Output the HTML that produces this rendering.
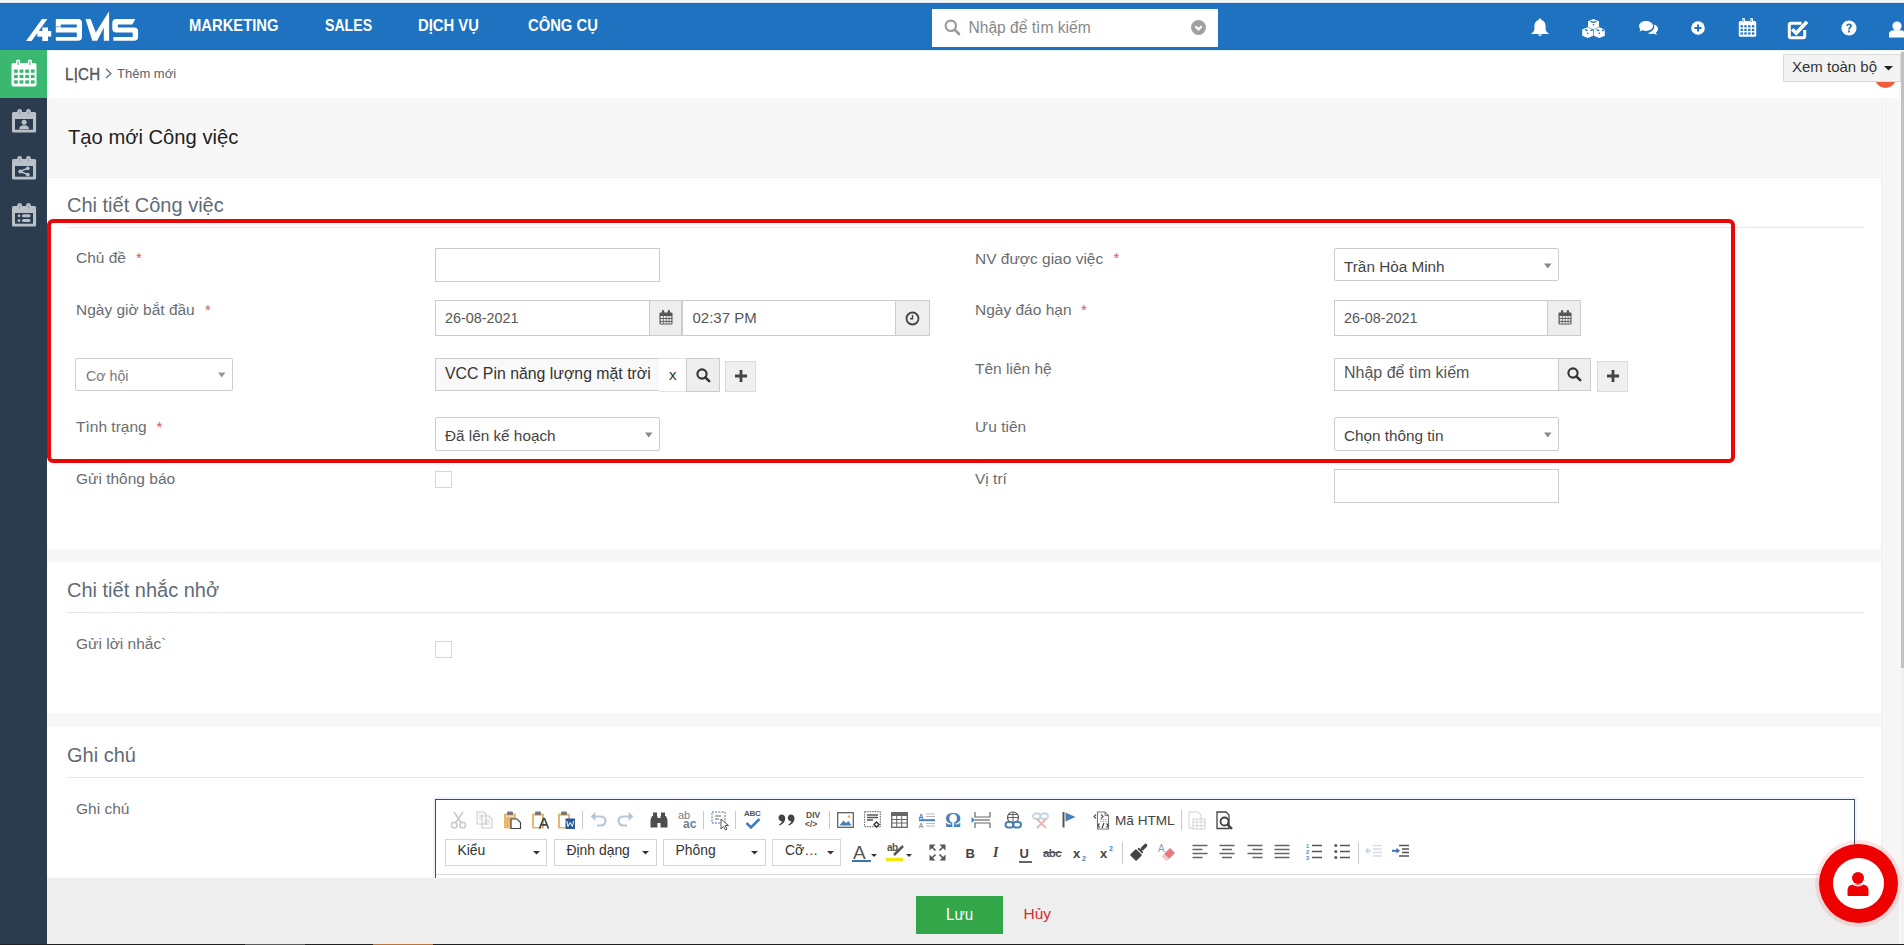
<!DOCTYPE html>
<html><head><meta charset="utf-8"><title>Tạo mới Công việc</title>
<style>
*{box-sizing:border-box;margin:0;padding:0}
html,body{width:1904px;height:945px;overflow:hidden;background:#f7f7f7;font-family:"Liberation Sans",sans-serif;position:relative}
.a{position:absolute}
.t{position:absolute;line-height:1;white-space:nowrap}
svg{position:absolute;overflow:visible}
</style></head><body>
<div class="a" style="left:0px;top:0px;width:1904px;height:2px;background:#f1f6f2"></div>
<div class="a" style="left:0px;top:2px;width:1904px;height:1px;background:#dcecfb"></div>
<div class="a" style="left:0px;top:3px;width:1904px;height:47px;background:#1e72bf"></div>
<div class="a" style="left:0px;top:3px;width:1904px;height:1px;background:#2c62a2"></div>
<svg style="left:0px;top:0px" width="150" height="50" viewBox="0 0 150 50">
<g fill="#fff">
<path d="M26 41 L31.6 41 L47.4 19 L42 19 Z"/>
<path d="M42.3 27.5 L48 27.5 L48 41 L42.3 41 Z"/>
<path d="M37.3 31 L51.2 31 L51.2 36.6 L37.3 36.6 Z"/>
<path fill-rule="evenodd" d="M55.8 19 L78 19 Q82 19 82 23 L82 36.8 Q82 40.8 78 40.8 L55.8 40.8 L55.8 37 L76.8 37 L76.8 32.4 L55.8 32.4 Z M60.8 24.4 L76.8 24.4 L76.8 27.4 L60.8 27.4 Z"/>
<path d="M55.8 26.2 L61 26.2 L61 27.2 L55.8 27.2 Z" fill="#7fb0de"/>
<path d="M85.5 19 L90.6 19 L95.8 32.6 L108.4 12.2 L109.1 12.2 L109.1 40.8 L103.8 40.8 L103.8 27.5 L97.2 40.8 L92.3 40.8 Z"/>
<path d="M116 19 L135.4 19 L132.3 24.4 L117.9 24.4 L117.9 27.4 L134.1 27.4 Q138.1 27.4 138.1 31.4 L138.1 36.8 Q138.1 40.8 134.1 40.8 L113.3 40.8 L113.3 37 L132.7 37 L132.7 32.4 L116.3 32.4 Q112.3 32.4 112.3 28.4 L112.3 23 Q112.3 19 116 19 Z"/>
</g></svg>
<div class="t" style="left:189px;top:17.11px;font-size:17px;color:#fff;font-weight:700;transform:scaleX(0.87);transform-origin:0 0;letter-spacing:0">MARKETING</div>
<div class="t" style="left:325px;top:17.11px;font-size:17px;color:#fff;font-weight:700;transform:scaleX(0.83);transform-origin:0 0">SALES</div>
<div class="t" style="left:418px;top:17.11px;font-size:17px;color:#fff;font-weight:700;transform:scaleX(0.87);transform-origin:0 0;letter-spacing:0">DỊCH VỤ</div>
<div class="t" style="left:528px;top:17.11px;font-size:17px;color:#fff;font-weight:700;transform:scaleX(0.87);transform-origin:0 0;letter-spacing:0">CÔNG CỤ</div>
<div class="a" style="left:932px;top:9px;width:286px;height:38px;background:#fff"></div>
<svg style="left:944px;top:19px" width="17" height="17" viewBox="0 0 17 17"><circle cx="6.8" cy="6.8" r="5.2" fill="none" stroke="#9a9a9a" stroke-width="2.2"/><path d="M10.6 10.6 L15 15" stroke="#9a9a9a" stroke-width="2.6" stroke-linecap="round"/></svg>
<div class="t" style="left:968.5px;top:19.54px;font-size:15.6px;color:#888;font-weight:400;">Nhập để tìm kiếm</div>
<svg style="left:1191px;top:20px" width="15" height="15" viewBox="0 0 15 15"><circle cx="7.5" cy="7.5" r="7.5" fill="#a0a0a0"/><path d="M4.3 6.2 L7.5 9.4 L10.7 6.2" fill="none" stroke="#fff" stroke-width="2.2"/></svg>
<svg style="left:1531px;top:18px" width="18" height="19" viewBox="0 0 18 19"><path d="M9 0.5 C9.9 0.5 10.3 1.1 10.3 1.9 C13.3 2.6 14.6 5 14.6 8.2 L14.6 11 C14.6 13 16 14.5 17.6 15.4 L17.6 16.1 L0.4 16.1 L0.4 15.4 C2 14.5 3.4 13 3.4 11 L3.4 8.2 C3.4 5 4.7 2.6 7.7 1.9 C7.7 1.1 8.1 0.5 9 0.5 Z" fill="#fff"/><path d="M6.8 16.6 Q9 19.6 11.2 16.6 Z" fill="#fff"/></svg>
<svg style="left:1582px;top:19px" width="23" height="19" viewBox="0 0 23 19">
<path d="M11.5 0 L17 2.2 L17 8 L11.5 10.2 L6 8 L6 2.2 Z" fill="#fff"/>
<path d="M5.7 8.3 L11.2 10.5 L11.2 16.8 L5.7 19 L0.2 16.8 L0.2 10.5 Z" fill="#fff"/>
<path d="M17.3 8.3 L22.8 10.5 L22.8 16.8 L17.3 19 L11.8 16.8 L11.8 10.5 Z" fill="#fff"/>
<path d="M8.5 2.3 L11.5 3.4 L14.5 2.3 M3 10.6 L5.7 11.7 M8.5 11.7 L11 10.6 M14.5 10.6 L17.3 11.7 M20 11.7 L22.6 10.6 M11.5 5 L11.5 6.5 M5.7 13.5 L5.7 15 M17.3 13.5 L17.3 15" stroke="#1e72bf" stroke-width="1.3" fill="none"/>
</svg>
<svg style="left:1639px;top:21px" width="19" height="14" viewBox="0 0 19 14">
<ellipse cx="7" cy="5" rx="7" ry="5" fill="#fff"/><path d="M1.5 7.5 L0.5 10.5 L4.5 8.8 Z" fill="#fff"/>
<path d="M14.2 3.3 C17.2 4 19 5.8 19 8 C19 9.5 18.2 10.8 16.8 11.7 L18 14 L14.5 12.6 C13.6 12.8 12.8 12.9 12 12.9 C10.5 12.9 9 12.5 7.8 11.8 C12 11.3 15 8.6 15 5.4 C15 4.7 14.7 4 14.2 3.3 Z" fill="#fff"/>
<path d="M14.2 3.3 C15 4.8 15 6.5 14 8 C12.8 10 10.5 11.3 7.8 11.8" fill="none" stroke="#1e72bf" stroke-width="0.9"/>
</svg>
<svg style="left:1690.5px;top:21px" width="14" height="14" viewBox="0 0 14 14"><circle cx="7" cy="7" r="6.8" fill="#fff"/><path d="M7 3.5 L7 10.5 M3.5 7 L10.5 7" stroke="#1e72bf" stroke-width="2"/></svg>
<svg style="left:1738px;top:18px" width="19" height="19" viewBox="0 0 19 19">
<rect x="0.8" y="3" width="17.4" height="15.8" rx="1.5" fill="#fff"/>
<rect x="4" y="0" width="3" height="5" rx="1.3" fill="#fff"/><rect x="12" y="0" width="3" height="5" rx="1.3" fill="#fff"/>
<path d="M5 1.2 L5 4 M13 1.2 L13 4" stroke="#1e72bf" stroke-width="0.9"/>
<g fill="#1e72bf"><rect x="2.5" y="7.2" width="2.4" height="2.2"/><rect x="6.3" y="7.2" width="2.4" height="2.2"/><rect x="10.1" y="7.2" width="2.4" height="2.2"/><rect x="13.9" y="7.2" width="2.4" height="2.2"/>
<rect x="2.5" y="10.8" width="2.4" height="2.2"/><rect x="6.3" y="10.8" width="2.4" height="2.2"/><rect x="10.1" y="10.8" width="2.4" height="2.2"/><rect x="13.9" y="10.8" width="2.4" height="2.2"/>
<rect x="2.5" y="14.4" width="2.4" height="2.2"/><rect x="6.3" y="14.4" width="2.4" height="2.2"/><rect x="10.1" y="14.4" width="2.4" height="2.2"/><rect x="13.9" y="14.4" width="2.4" height="2.2"/></g>
</svg>
<svg style="left:1787px;top:19px" width="22" height="21" viewBox="0 0 22 21">
<path d="M14.5 4.3 L3.8 4.3 Q2.3 4.3 2.3 5.8 L2.3 17.2 Q2.3 18.7 3.8 18.7 L16.2 18.7 Q17.7 18.7 17.7 17.2 L17.7 11" fill="none" stroke="#fff" stroke-width="3"/>
<path d="M5.2 10.2 L9.2 14.2 L20 2.8" fill="none" stroke="#fff" stroke-width="3.6"/>
</svg>
<svg style="left:1841px;top:20px" width="16" height="16" viewBox="0 0 16 16"><circle cx="8" cy="8" r="7.6" fill="#fff"/>
<path d="M5.3 6 C5.3 4.3 6.5 3.4 8.1 3.4 C9.8 3.4 11 4.4 11 5.8 C11 7.6 8.9 7.8 8.9 9.5 L7.1 9.5 C7.1 7.2 9 7.1 9 5.9 C9 5.3 8.6 5 8 5 C7.4 5 7 5.4 7 6.1 Z" fill="#1e72bf"/><rect x="7.1" y="10.5" width="1.9" height="1.9" fill="#1e72bf"/></svg>
<svg style="left:1888px;top:21px" width="18" height="17" viewBox="0 0 18 17"><circle cx="9" cy="5" r="4.6" fill="#fff"/><path d="M1 16.5 L1 13 C1 10.5 3 9.3 5.5 9.3 L12.5 9.3 C15 9.3 17 10.5 17 13 L17 16.5 Z" fill="#fff"/></svg>
<div class="a" style="left:0px;top:50px;width:47px;height:895px;background:#2b3c4e"></div>
<div class="a" style="left:0px;top:50px;width:47px;height:48px;background:#3ab870"></div>
<svg style="left:11px;top:59px" width="26" height="28" viewBox="0 0 26 28">
<rect x="0.5" y="4" width="25" height="23.5" rx="2" fill="#fff"/>
<rect x="5" y="0.5" width="4.2" height="7" rx="2" fill="#fff"/><rect x="16.8" y="0.5" width="4.2" height="7" rx="2" fill="#fff"/>
<path d="M7.1 2 L7.1 6 M18.9 2 L18.9 6" stroke="#3ab870" stroke-width="1"/>
<g fill="#3ab870">
<rect x="3" y="10.5" width="3.8" height="3.3"/><rect x="8.6" y="10.5" width="3.8" height="3.3"/><rect x="14.2" y="10.5" width="3.8" height="3.3"/><rect x="19.8" y="10.5" width="3.8" height="3.3"/>
<rect x="3" y="15.8" width="3.8" height="3.3"/><rect x="8.6" y="15.8" width="3.8" height="3.3"/><rect x="14.2" y="15.8" width="3.8" height="3.3"/><rect x="19.8" y="15.8" width="3.8" height="3.3"/>
<rect x="3" y="21.3" width="3.8" height="3.3"/><rect x="8.6" y="21.3" width="3.8" height="3.3"/><rect x="14.2" y="21.3" width="3.8" height="3.3"/><rect x="19.8" y="21.3" width="3.8" height="3.3"/>
</g></svg>
<svg style="left:12px;top:109px" width="25" height="25" viewBox="0 0 25 25">
<rect x="0" y="3.1" width="24.1" height="20.5" rx="1.5" fill="#b9c0c8"/>
<rect x="5.3" y="0" width="4.7" height="6.8" rx="2.3" fill="#b9c0c8"/><rect x="14.1" y="0" width="4.7" height="6.8" rx="2.3" fill="#b9c0c8"/>
<path d="M7.65 2.2 L7.65 5.6 M16.45 2.2 L16.45 5.6" stroke="#8f98a2" stroke-width="0.9"/>
<rect x="3" y="10" width="18" height="10.7" fill="#2b3c4e"/>
<circle cx="12.1" cy="13.2" r="2.5" fill="#b9c0c8"/><path d="M7.2 20.2 Q7.2 16.3 12.1 16.3 Q17 16.3 17 20.2 Z" fill="#b9c0c8"/></svg>
<svg style="left:12px;top:156px" width="25" height="25" viewBox="0 0 25 25">
<rect x="0" y="3.1" width="24.1" height="20.5" rx="1.5" fill="#b9c0c8"/>
<rect x="5.3" y="0" width="4.7" height="6.8" rx="2.3" fill="#b9c0c8"/><rect x="14.1" y="0" width="4.7" height="6.8" rx="2.3" fill="#b9c0c8"/>
<path d="M7.65 2.2 L7.65 5.6 M16.45 2.2 L16.45 5.6" stroke="#8f98a2" stroke-width="0.9"/>
<rect x="3" y="10" width="18" height="10.7" fill="#2b3c4e"/>
<circle cx="15.8" cy="12.3" r="1.9" fill="#b9c0c8"/><circle cx="15.8" cy="18.6" r="1.9" fill="#b9c0c8"/><circle cx="8.3" cy="15.4" r="2" fill="#b9c0c8"/><path d="M15.8 12.3 L8.3 15.4 L15.8 18.6" stroke="#b9c0c8" stroke-width="1.5" fill="none"/></svg>
<svg style="left:12px;top:203px" width="25" height="25" viewBox="0 0 25 25">
<rect x="0" y="3.1" width="24.1" height="20.5" rx="1.5" fill="#b9c0c8"/>
<rect x="5.3" y="0" width="4.7" height="6.8" rx="2.3" fill="#b9c0c8"/><rect x="14.1" y="0" width="4.7" height="6.8" rx="2.3" fill="#b9c0c8"/>
<path d="M7.65 2.2 L7.65 5.6 M16.45 2.2 L16.45 5.6" stroke="#8f98a2" stroke-width="0.9"/>
<rect x="3" y="10" width="18" height="10.7" fill="#2b3c4e"/>
<circle cx="7" cy="12.8" r="1.4" fill="#b9c0c8"/><circle cx="7" cy="17.6" r="1.4" fill="#b9c0c8"/><rect x="10" y="11.3" width="8.5" height="3" rx="1.5" fill="#b9c0c8"/><rect x="10" y="16.1" width="8.5" height="3" rx="1.5" fill="#b9c0c8"/></svg>
<div class="a" style="left:47px;top:50px;width:1852px;height:48px;background:#fff"></div>
<div class="a" style="left:47px;top:50px;width:1852px;height:1px;background:#eaf8f1"></div>
<div class="a" style="left:0px;top:49px;width:1904px;height:1px;background:#1d6db5"></div>
<div class="t" style="left:65px;top:66.76px;font-size:16px;color:#4f565d;font-weight:400;transform:scaleX(0.94);transform-origin:0 0;letter-spacing:0.3px;-webkit-text-stroke:0.35px #4f565d">LỊCH</div>
<svg style="left:105px;top:68px" width="7" height="11" viewBox="0 0 7 11"><path d="M1 1 L6 5.5 L1 10" fill="none" stroke="#5a6168" stroke-width="1.2"/></svg>
<div class="t" style="left:117px;top:66.50px;font-size:13px;color:#5a6168;font-weight:400;">Thêm mới</div>
<div class="a" style="left:1875px;top:67px;width:21px;height:21px;border-radius:50%;background:#ef5b3b;z-index:0"></div>
<div class="a" style="left:1783px;top:54px;width:118px;height:28px;background:#f3f3f3;border:1px solid #dadada;z-index:1"></div>
<div class="t" style="left:1792px;top:59.10px;font-size:15px;color:#333;font-weight:400;z-index:2">Xem toàn bộ</div>
<svg style="left:1884px;top:66px;z-index:2" width="9" height="5" viewBox="0 0 9 5"><path d="M0 0 L9 0 L4.5 4.5 Z" fill="#222"/></svg>
<div class="t" style="left:68px;top:127.00px;font-size:20.2px;color:#222;font-weight:400;">Tạo mới Công việc</div>
<div class="a" style="left:47px;top:177px;width:1834px;height:372px;background:#fff;border-top:1px solid #f0f0f0"></div>
<div class="a" style="left:47px;top:562px;width:1834px;height:151px;background:#fff"></div>
<div class="a" style="left:47px;top:727px;width:1834px;height:151px;background:#fff"></div>
<div class="t" style="left:67px;top:194.97px;font-size:20px;color:#5f6b76;font-weight:400;">Chi tiết Công việc</div>
<div class="a" style="left:67px;top:227px;width:1797px;height:1px;background:#e6e6e6"></div>
<div class="t" style="left:67px;top:579.77px;font-size:20px;color:#5f6b76;font-weight:400;">Chi tiết nhắc nhở</div>
<div class="a" style="left:67px;top:612px;width:1797px;height:1px;background:#e6e6e6"></div>
<div class="t" style="left:67px;top:744.57px;font-size:20px;color:#5f6b76;font-weight:400;">Ghi chú</div>
<div class="a" style="left:67px;top:777px;width:1797px;height:1px;background:#e6e6e6"></div>
<div class="t" style="left:76px;top:250.48px;font-size:15.5px;color:#696d72;font-weight:400;">Chủ đề</div>
<div class="t" style="left:136px;top:249.90px;font-size:15px;color:#e0555a;font-weight:400;">*</div>
<div class="t" style="left:76px;top:302.18px;font-size:15.5px;color:#696d72;font-weight:400;">Ngày giờ bắt đầu</div>
<div class="t" style="left:205px;top:301.60px;font-size:15px;color:#e0555a;font-weight:400;">*</div>
<div class="t" style="left:76px;top:419.48px;font-size:15.5px;color:#696d72;font-weight:400;">Tình trạng</div>
<div class="t" style="left:156.5px;top:418.90px;font-size:15px;color:#e0555a;font-weight:400;">*</div>
<div class="t" style="left:76px;top:471.28px;font-size:15.5px;color:#696d72;font-weight:400;">Gửi thông báo</div>
<div class="t" style="left:975px;top:250.58px;font-size:15.5px;color:#696d72;font-weight:400;">NV được giao việc</div>
<div class="t" style="left:1113.5px;top:250.00px;font-size:15px;color:#e0555a;font-weight:400;">*</div>
<div class="t" style="left:975px;top:302.18px;font-size:15.5px;color:#696d72;font-weight:400;">Ngày đáo hạn</div>
<div class="t" style="left:1081px;top:301.60px;font-size:15px;color:#e0555a;font-weight:400;">*</div>
<div class="t" style="left:975px;top:360.68px;font-size:15.5px;color:#696d72;font-weight:400;">Tên liên hệ</div>
<div class="t" style="left:975px;top:419.48px;font-size:15.5px;color:#696d72;font-weight:400;">Ưu tiên</div>
<div class="t" style="left:975px;top:471.28px;font-size:15.5px;color:#696d72;font-weight:400;">Vị trí</div>
<div class="t" style="left:76px;top:636.48px;font-size:15.5px;color:#696d72;font-weight:400;">Gửi lời nhắc`</div>
<div class="t" style="left:76px;top:801.28px;font-size:15.5px;color:#696d72;font-weight:400;">Ghi chú</div>
<div class="a" style="left:435px;top:248px;width:225px;height:34px;background:#fff;border:1px solid #cccccc"></div>
<div class="a" style="left:1334px;top:248px;width:225px;height:33px;background:#fff;border:1px solid #cccccc;border-radius:2px"></div>
<div class="t" style="left:1344px;top:258.85px;font-size:15.3px;color:#444;font-weight:400;">Trần Hòa Minh</div>
<svg style="left:1544px;top:263px" width="8" height="6" viewBox="0 0 8 6"><path d="M0 0.5 L7.5 0.5 L3.75 5.5 Z" fill="#888"/></svg>
<div class="a" style="left:435px;top:300px;width:215px;height:36px;background:#fff;border:1px solid #cccccc"></div>
<div class="a" style="left:649px;top:300px;width:33px;height:36px;background:#eee;border:1px solid #cccccc"></div>
<svg style="left:659px;top:310px" width="14" height="15" viewBox="0 0 14 15">
<rect x="0.5" y="2.5" width="13" height="12" rx="1" fill="#555"/>
<rect x="3" y="0" width="2.2" height="4" rx="1" fill="#555"/><rect x="8.8" y="0" width="2.2" height="4" rx="1" fill="#555"/>
<g fill="#eee"><rect x="1.7" y="6" width="2.2" height="2"/><rect x="4.6" y="6" width="2.2" height="2"/><rect x="7.5" y="6" width="2.2" height="2"/><rect x="10.4" y="6" width="2" height="2"/>
<rect x="1.7" y="8.9" width="2.2" height="2"/><rect x="4.6" y="8.9" width="2.2" height="2"/><rect x="7.5" y="8.9" width="2.2" height="2"/><rect x="10.4" y="8.9" width="2" height="2"/>
<rect x="1.7" y="11.8" width="2.2" height="1.8"/><rect x="4.6" y="11.8" width="2.2" height="1.8"/><rect x="7.5" y="11.8" width="2.2" height="1.8"/><rect x="10.4" y="11.8" width="2" height="1.8"/></g>
</svg>
<div class="t" style="left:445px;top:310.81px;font-size:14.4px;color:#555;font-weight:400;">26-08-2021</div>
<div class="a" style="left:682px;top:300px;width:214px;height:36px;background:#fff;border:1px solid #cccccc"></div>
<div class="a" style="left:895px;top:300px;width:35px;height:36px;background:#eee;border:1px solid #cccccc"></div>
<svg style="left:905px;top:311px" width="15" height="15" viewBox="0 0 15 15"><circle cx="7.5" cy="7.5" r="6" fill="none" stroke="#444" stroke-width="1.8"/><path d="M7.5 4 L7.5 7.8 L5 7.8" fill="none" stroke="#444" stroke-width="1.4"/></svg>
<div class="t" style="left:692.5px;top:310.10px;font-size:15px;color:#555;font-weight:400;">02:37 PM</div>
<div class="a" style="left:1334px;top:300px;width:214px;height:36px;background:#fff;border:1px solid #cccccc"></div>
<div class="a" style="left:1547px;top:300px;width:34px;height:36px;background:#eee;border:1px solid #cccccc"></div>
<svg style="left:1558px;top:310px" width="14" height="15" viewBox="0 0 14 15">
<rect x="0.5" y="2.5" width="13" height="12" rx="1" fill="#555"/>
<rect x="3" y="0" width="2.2" height="4" rx="1" fill="#555"/><rect x="8.8" y="0" width="2.2" height="4" rx="1" fill="#555"/>
<g fill="#eee"><rect x="1.7" y="6" width="2.2" height="2"/><rect x="4.6" y="6" width="2.2" height="2"/><rect x="7.5" y="6" width="2.2" height="2"/><rect x="10.4" y="6" width="2" height="2"/>
<rect x="1.7" y="8.9" width="2.2" height="2"/><rect x="4.6" y="8.9" width="2.2" height="2"/><rect x="7.5" y="8.9" width="2.2" height="2"/><rect x="10.4" y="8.9" width="2" height="2"/>
<rect x="1.7" y="11.8" width="2.2" height="1.8"/><rect x="4.6" y="11.8" width="2.2" height="1.8"/><rect x="7.5" y="11.8" width="2.2" height="1.8"/><rect x="10.4" y="11.8" width="2" height="1.8"/></g>
</svg>
<div class="t" style="left:1344px;top:310.51px;font-size:14.4px;color:#555;font-weight:400;">26-08-2021</div>
<div class="a" style="left:75px;top:358px;width:158px;height:33px;background:#fff;border:1px solid #cfcfcf;border-radius:2px"></div>
<div class="t" style="left:86px;top:368.68px;font-size:14.2px;color:#7a7a7a;font-weight:400;">Cơ hội</div>
<svg style="left:218px;top:372px" width="8" height="6" viewBox="0 0 8 6"><path d="M0 0.5 L7.5 0.5 L3.75 5.5 Z" fill="#999"/></svg>
<div class="a" style="left:435px;top:358px;width:225px;height:33px;background:#f9f9f9;border:1px solid #cccccc"></div>
<div class="t" style="left:445px;top:365.88px;font-size:15.85px;color:#333;font-weight:400;">VCC Pin năng lượng mặt trời</div>
<div class="a" style="left:659px;top:358px;width:28px;height:34px;background:#fff;border:1px solid #e3e3e3;border-left:none"></div>
<div class="t" style="left:669px;top:366.90px;font-size:15px;color:#333;font-weight:400;">x</div>
<div class="a" style="left:686px;top:358px;width:34px;height:34px;background:#eee;border:1px solid #cccccc"></div>
<svg style="left:696px;top:368px" width="15" height="15" viewBox="0 0 15 15"><circle cx="6" cy="6" r="4.6" fill="none" stroke="#333" stroke-width="2.1"/><path d="M9.3 9.3 L13.2 13.2" stroke="#333" stroke-width="2.6" stroke-linecap="round"/></svg>
<div class="a" style="left:725px;top:361px;width:31px;height:31px;background:#f0f0f0;border:1px solid #dcdcdc"></div>
<svg style="left:734.5px;top:369.5px" width="12" height="12" viewBox="0 0 12 12"><path d="M6 0 L6 12 M0 6 L12 6" stroke="#444" stroke-width="2.8"/></svg>
<div class="a" style="left:1334px;top:358px;width:225px;height:33px;background:#fff;border:1px solid #cccccc"></div>
<div class="t" style="left:1344px;top:365.26px;font-size:16px;color:#555;font-weight:400;">Nhập để tìm kiếm</div>
<div class="a" style="left:1558px;top:358px;width:33px;height:33px;background:#eee;border:1px solid #cccccc"></div>
<svg style="left:1567px;top:367px" width="15" height="15" viewBox="0 0 15 15"><circle cx="6" cy="6" r="4.6" fill="none" stroke="#333" stroke-width="2.1"/><path d="M9.3 9.3 L13.2 13.2" stroke="#333" stroke-width="2.6" stroke-linecap="round"/></svg>
<div class="a" style="left:1597px;top:361px;width:31px;height:31px;background:#f0f0f0;border:1px solid #dcdcdc"></div>
<svg style="left:1606.5px;top:369.5px" width="12" height="12" viewBox="0 0 12 12"><path d="M6 0 L6 12 M0 6 L12 6" stroke="#444" stroke-width="2.8"/></svg>
<div class="a" style="left:435px;top:417px;width:225px;height:34px;background:#fff;border:1px solid #cccccc;border-radius:2px"></div>
<div class="t" style="left:445px;top:428.45px;font-size:15.3px;color:#444;font-weight:400;">Đã lên kế hoạch</div>
<svg style="left:645px;top:432px" width="8" height="6" viewBox="0 0 8 6"><path d="M0 0.5 L7.5 0.5 L3.75 5.5 Z" fill="#888"/></svg>
<div class="a" style="left:1334px;top:417px;width:225px;height:34px;background:#fff;border:1px solid #cccccc;border-radius:2px"></div>
<div class="t" style="left:1344px;top:428.45px;font-size:15.3px;color:#444;font-weight:400;">Chọn thông tin</div>
<svg style="left:1544px;top:432px" width="8" height="6" viewBox="0 0 8 6"><path d="M0 0.5 L7.5 0.5 L3.75 5.5 Z" fill="#888"/></svg>
<div class="a" style="left:435px;top:471px;width:17px;height:17px;background:#fff;border:1px solid #d6d6d6"></div>
<div class="a" style="left:1334px;top:469px;width:225px;height:34px;background:#fff;border:1px solid #cccccc"></div>
<div class="a" style="left:435px;top:641px;width:17px;height:17px;background:#fff;border:1px solid #d6d6d6"></div>
<div class="a" style="left:47px;top:219px;width:1688px;height:244px;border:4px solid #e80808;border-radius:6px;z-index:5"></div>
<div class="a" style="left:433px;top:797px;width:1424px;height:90px;background:#e3edfb;opacity:0.6"></div>
<div class="a" style="left:435px;top:799px;width:1420px;height:90px;background:#fff;border:1px solid #3e4d6a;border-bottom:none"></div>
<div class="a" style="left:436px;top:874px;width:1418px;height:1px;background:#dcdcdc"></div>
<svg style="left:450px;top:811px" width="17" height="18" viewBox="0 0 17 18"><path d="M4 1 L11.5 12 M13 1 L5.5 12" stroke="#c9ccd0" stroke-width="1.8"/><circle cx="4.3" cy="14.2" r="2.8" fill="none" stroke="#c9ccd0" stroke-width="1.6"/><circle cx="12.7" cy="14.2" r="2.8" fill="none" stroke="#c9ccd0" stroke-width="1.6"/></svg>
<svg style="left:476px;top:811px" width="17" height="18" viewBox="0 0 17 18"><path d="M1 1 L8 1 L10 3 L10 13 L1 13 Z M6 5 L13 5 L16 8 L16 17 L6 17 Z" fill="#fff" stroke="#c9ccd0" stroke-width="1.1"/><path d="M3 4 L7 4 M3 6 L7 6 M3 8 L5 8 M8 9 L14 9 M8 11 L14 11 M8 13 L14 13" stroke="#c9ccd0" stroke-width="0.8"/></svg>
<svg style="left:503px;top:811px" width="19" height="18" viewBox="0 0 19 18"><rect x="1" y="2.5" width="12" height="15" rx="1" fill="#e8b66e"/><rect x="4" y="0.5" width="6" height="3.5" rx="1" fill="#777"/><rect x="3" y="4.5" width="8" height="1.5" fill="#fff" opacity="0.5"/><path d="M8 8 L14 8 L17.5 11.5 L17.5 17.5 L8 17.5 Z" fill="#fff" stroke="#444" stroke-width="1.2"/></svg>
<svg style="left:531px;top:811px" width="19" height="18" viewBox="0 0 19 18"><rect x="1" y="2.5" width="12" height="15" rx="1" fill="#e8b66e"/><rect x="4" y="0.5" width="6" height="3.5" rx="1" fill="#777"/><rect x="3" y="4.5" width="8" height="1.5" fill="#fff" opacity="0.5"/><rect x="3" y="5" width="8" height="11" fill="#fff"/><path d="M8.5 17.5 L12.5 7.5 L13.5 7.5 L17.5 17.5 M10.2 13.8 L15.8 13.8" stroke="#444" stroke-width="1.7" fill="none"/></svg>
<svg style="left:557px;top:811px" width="19" height="18" viewBox="0 0 19 18"><rect x="1" y="2.5" width="12" height="15" rx="1" fill="#e8b66e"/><rect x="4" y="0.5" width="6" height="3.5" rx="1" fill="#777"/><rect x="3" y="4.5" width="8" height="1.5" fill="#fff" opacity="0.5"/><rect x="3" y="5" width="8" height="11" fill="#fff"/><rect x="8.5" y="7.5" width="9.5" height="10.5" fill="#2b5797"/><path d="M9.8 10 L11 15.5 L13.2 11.5 L15.4 15.5 L16.6 10" stroke="#fff" stroke-width="1" fill="none"/></svg>
<div class="a" style="left:582px;top:811px;width:1px;height:18px;background:#c8c8c8"></div>
<svg style="left:590px;top:811px" width="17" height="16" viewBox="0 0 17 16"><path d="M4 5.5 L10 5.5 Q15.5 5.5 15.5 10 Q15.5 14.5 10 14.5 L7 14.5" fill="none" stroke="#b8c7d8" stroke-width="2.2"/><path d="M0.5 5.5 L5.5 1 L5.5 10 Z" fill="#b8c7d8"/></svg>
<svg style="left:617px;top:811px" width="17" height="16" viewBox="0 0 17 16"><path d="M13 5.5 L7 5.5 Q1.5 5.5 1.5 10 Q1.5 14.5 7 14.5 L10 14.5" fill="none" stroke="#b8c7d8" stroke-width="2.2"/><path d="M16.5 5.5 L11.5 1 L11.5 10 Z" fill="#b8c7d8"/></svg>
<svg style="left:650px;top:812px" width="18" height="16" viewBox="0 0 18 16"><path d="M2 4 L7.5 4 L7.5 15.5 L0.5 15.5 L0.5 8 Z M10.5 4 L16 4 L17.5 8 L17.5 15.5 L10.5 15.5 Z M3 0.5 L7 0.5 L7 4 L3 4 Z M11 0.5 L15 0.5 L15 4 L11 4 Z M7.5 6 L10.5 6 L10.5 11 L7.5 11 Z" fill="#4d4d4d"/></svg>
<div class="t" style="left:678px;top:810px;font-size:11px;color:#6d7f92;line-height:1">ab</div>
<div class="t" style="left:683px;top:818px;font-size:12px;color:#6d7f92;line-height:1;font-weight:bold">ac</div>
<div class="a" style="left:703px;top:811px;width:1px;height:18px;background:#c8c8c8"></div>
<svg style="left:711px;top:811px" width="19" height="19" viewBox="0 0 19 19"><rect x="1" y="1" width="13" height="11" fill="none" stroke="#4a6fa5" stroke-width="1" stroke-dasharray="2,1.2"/><path d="M4 5 L10 5 M4 8 L8 8" stroke="#666" stroke-width="1.2"/><path d="M10 8 L10 18 L12.5 15.5 L14.5 19 L16 18 L14 14.5 L17.5 14.5 Z" fill="#fff" stroke="#555" stroke-width="1"/></svg>
<div class="a" style="left:735px;top:811px;width:1px;height:18px;background:#c8c8c8"></div>
<div class="t" style="left:744px;top:810px;font-size:8px;color:#555;line-height:1;font-weight:bold;letter-spacing:-0.3px">ABC</div>
<svg style="left:745px;top:818px" width="16" height="11" viewBox="0 0 16 11"><path d="M1.5 5 L6 9.5 L14.5 1" fill="none" stroke="#3c7fc3" stroke-width="2.6"/></svg>
<svg style="left:778px;top:814px" width="17" height="12" viewBox="0 0 17 12"><path d="M3.5 0.5 C5.8 0.5 7.2 2 7.2 4.3 C7.2 7.5 5 10.5 1.5 11.5 L1 10.5 C2.8 9.6 3.8 8.3 3.9 7.2 C1.9 7 0.5 5.8 0.5 3.9 C0.5 1.8 1.8 0.5 3.5 0.5 Z M12.8 0.5 C15.1 0.5 16.5 2 16.5 4.3 C16.5 7.5 14.3 10.5 10.8 11.5 L10.3 10.5 C12.1 9.6 13.1 8.3 13.2 7.2 C11.2 7 9.8 5.8 9.8 3.9 C9.8 1.8 11.1 0.5 12.8 0.5 Z" fill="#444"/></svg>
<div class="t" style="left:806px;top:811px;font-size:8.5px;color:#555;line-height:1;font-weight:bold">DIV</div>
<div class="t" style="left:805px;top:820px;font-size:8.5px;color:#555;line-height:1;font-weight:bold">&lt;/&gt;</div>
<div class="a" style="left:829px;top:811px;width:1px;height:18px;background:#c8c8c8"></div>
<svg style="left:837px;top:812px" width="17" height="16" viewBox="0 0 17 16"><rect x="0.7" y="0.7" width="15.6" height="14.6" fill="#fff" stroke="#555" stroke-width="1.2"/><path d="M2.5 13.5 L6.5 8.5 L9 11 L11.5 9 L14.5 13.5 Z" fill="#4a7fb8"/><circle cx="12" cy="4.5" r="1.3" fill="#e8a060"/></svg>
<svg style="left:864px;top:811px" width="17" height="18" viewBox="0 0 17 18"><rect x="0.7" y="0.7" width="15.6" height="15" fill="none" stroke="#555" stroke-width="1" stroke-dasharray="1.5,1"/><path d="M3 4 L14 4 M3 6.5 L14 6.5 M3 9 L9 9" stroke="#555" stroke-width="1.4"/><path d="M10 13.5 L12.5 11 L15 13.5 L12.5 16 Z" fill="none" stroke="#333" stroke-width="1.4"/></svg>
<svg style="left:891px;top:812px" width="17" height="16" viewBox="0 0 17 16"><rect x="0.7" y="0.7" width="15.6" height="14.6" fill="#fff" stroke="#666" stroke-width="1.3"/><rect x="0.7" y="0.7" width="15.6" height="3.3" fill="#666"/><path d="M1 7.5 L16 7.5 M1 11 L16 11 M5.7 4 L5.7 15 M10.7 4 L10.7 15" stroke="#666" stroke-width="1"/></svg>
<svg style="left:918px;top:812px" width="18" height="17" viewBox="0 0 18 17"><path d="M1 8.2 L17 8.2" stroke="#4a7fb8" stroke-width="2"/><path d="M8 2 L17 2 M8 4.5 L17 4.5 M8 11.5 L17 11.5 M8 14 L17 14" stroke="#bbb" stroke-width="1.2"/><text x="0.5" y="6.5" font-size="7" font-family="Liberation Sans" font-weight="bold" fill="#4a7fb8">A</text><text x="0.5" y="15.5" font-size="7" font-family="Liberation Sans" font-weight="bold" fill="#999">A</text></svg>
<div class="t" style="left:945px;top:810px;font-size:20px;color:#3c7fc3;line-height:1;font-family:'Liberation Serif';font-weight:bold">&#937;</div>
<svg style="left:971px;top:811px" width="20" height="18" viewBox="0 0 20 18"><path d="M4 1 L4 6 L19 6 L19 1 M4 17 L4 12 L19 12 L19 17" fill="none" stroke="#666" stroke-width="1.2"/><path d="M0.5 6 L4 9 L0.5 12 Z" fill="#4a7fb8"/><path d="M4 9 L19 9" stroke="#666" stroke-width="1.2"/></svg>
<svg style="left:1004px;top:811px" width="19" height="19" viewBox="0 0 19 19"><circle cx="9" cy="6.5" r="5.5" fill="#fff" stroke="#555" stroke-width="1.2"/><path d="M3.5 6.5 L14.5 6.5 M9 1 L9 12 M5 3.5 L13 3.5" stroke="#555" stroke-width="0.9"/><rect x="1.5" y="11" width="8" height="5.5" rx="2.7" fill="none" stroke="#4a7fb8" stroke-width="2"/><rect x="9" y="11" width="8" height="5.5" rx="2.7" fill="none" stroke="#4a7fb8" stroke-width="2"/></svg>
<svg style="left:1032px;top:812px" width="18" height="17" viewBox="0 0 18 17"><rect x="1" y="1.5" width="7.5" height="5.5" rx="2.7" fill="none" stroke="#c5d4e4" stroke-width="1.8"/><rect x="8.5" y="1.5" width="7.5" height="5.5" rx="2.7" fill="none" stroke="#c5d4e4" stroke-width="1.8"/><path d="M5 7 L14 16 M14 7 L5 16" stroke="#f0b3b0" stroke-width="1.8"/></svg>
<svg style="left:1062px;top:811px" width="15" height="17" viewBox="0 0 15 17"><path d="M1.5 1 L1.5 16.5" stroke="#555" stroke-width="2"/><path d="M3.5 1.5 L13.5 6 L3.5 10.5 Z" fill="#4a7fb8"/></svg>
<svg style="left:1093px;top:811px" width="19" height="19" viewBox="0 0 19 19"><path d="M4.5 1 L12 1 L15.5 4.5 L15.5 18 L4.5 18 Z" fill="#fff" stroke="#777" stroke-width="1.1"/><path d="M12 1 L12 4.5 L15.5 4.5" fill="none" stroke="#777" stroke-width="1"/><path d="M3 3.5 L1 5.5 L3 7.5 M8 3.5 L10 5.5 L8 7.5" stroke="#555" stroke-width="1.2" fill="none"/><path d="M6.5 12.5 L4.8 14.5 L6.5 16.5 M13.5 12.5 L15.2 14.5 L13.5 16.5 M11 12 L9 17" stroke="#444" stroke-width="1.2" fill="none"/><path d="M7 8.5 L14 8.5 M7 10.5 L14 10.5" stroke="#999" stroke-width="0.8" stroke-dasharray="1.5,1"/></svg>
<div class="t" style="left:1115px;top:814.49px;font-size:13.6px;color:#444;font-weight:400;">Mã HTML</div>
<div class="a" style="left:1181px;top:810px;width:1px;height:20px;background:#c8c8c8"></div>
<svg style="left:1188px;top:811px" width="18" height="19" viewBox="0 0 18 19"><path d="M1 1 L10 1 L13 4 L13 17 L1 17 Z" fill="none" stroke="#ccd3da" stroke-width="1"/><rect x="5" y="8" width="12" height="10" fill="#fff" stroke="#ccd3da" stroke-width="1"/><path d="M5 11 L17 11 M5 14.5 L17 14.5 M9 8 L9 18 M13 8 L13 18" stroke="#ccd3da" stroke-width="0.8"/></svg>
<svg style="left:1216px;top:811px" width="18" height="19" viewBox="0 0 18 19"><path d="M1 1 L10 1 L13 4 L13 17.5 L1 17.5 Z" fill="#fff" stroke="#444" stroke-width="1.3"/><circle cx="8.5" cy="10.5" r="4" fill="#fff" stroke="#444" stroke-width="1.8"/><path d="M11.5 13.5 L16 18" stroke="#444" stroke-width="2.4"/></svg>
<div class="a" style="left:445px;top:839px;width:102px;height:27px;background:#fff;border:1px solid #d5d5d5"></div>
<div class="t" style="left:457.5px;top:843.83px;font-size:13.9px;color:#333;font-weight:400;">Kiểu</div>
<svg style="left:533px;top:851px" width="8" height="4" viewBox="0 0 8 4"><path d="M0 0 L7 0 L3.5 3.5 Z" fill="#333"/></svg>
<div class="a" style="left:554px;top:839px;width:103px;height:27px;background:#fff;border:1px solid #d5d5d5"></div>
<div class="t" style="left:566.5px;top:843.83px;font-size:13.9px;color:#333;font-weight:400;">Định dạng</div>
<svg style="left:642px;top:851px" width="8" height="4" viewBox="0 0 8 4"><path d="M0 0 L7 0 L3.5 3.5 Z" fill="#333"/></svg>
<div class="a" style="left:663px;top:839px;width:103px;height:27px;background:#fff;border:1px solid #d5d5d5"></div>
<div class="t" style="left:675.5px;top:843.83px;font-size:13.9px;color:#333;font-weight:400;">Phông</div>
<svg style="left:751px;top:851px" width="8" height="4" viewBox="0 0 8 4"><path d="M0 0 L7 0 L3.5 3.5 Z" fill="#333"/></svg>
<div class="a" style="left:772px;top:839px;width:69px;height:27px;background:#fff;border:1px solid #d5d5d5"></div>
<div class="t" style="left:785px;top:843.83px;font-size:13.9px;color:#333;font-weight:400;">Cỡ…</div>
<svg style="left:826.5px;top:851px" width="8" height="4" viewBox="0 0 8 4"><path d="M0 0 L7 0 L3.5 3.5 Z" fill="#333"/></svg>
<div class="t" style="left:853px;top:843px;font-size:19px;color:#555;line-height:1;font-weight:normal">A</div>
<div class="a" style="left:852px;top:859.5px;width:19px;height:2.5px;background:#3c72b0"></div>
<svg style="left:871px;top:854px" width="6" height="4" viewBox="0 0 6 4"><path d="M0 0 L6 0 L3 3 Z" fill="#333"/></svg>
<div class="t" style="left:887px;top:843px;font-size:10px;color:#555;line-height:1;font-weight:bold;letter-spacing:-0.5px">ab</div>
<svg style="left:890px;top:843px" width="15" height="14" viewBox="0 0 15 14"><path d="M4 12 L13 3" stroke="#555" stroke-width="2.5"/></svg>
<div class="a" style="left:886px;top:858px;width:17px;height:3px;background:#f0e80c"></div>
<svg style="left:906px;top:854px" width="6" height="4" viewBox="0 0 6 4"><path d="M0 0 L6 0 L3 3 Z" fill="#333"/></svg>
<svg style="left:929px;top:844px" width="17" height="17" viewBox="0 0 17 17"><path d="M0.5 0.5 L6.5 0.5 L0.5 6.5 Z M16.5 0.5 L10.5 0.5 L16.5 6.5 Z M0.5 16.5 L6.5 16.5 L0.5 10.5 Z M16.5 16.5 L10.5 16.5 L16.5 10.5 Z" fill="#555"/><path d="M2.5 2.5 L6.5 6.5 M14.5 2.5 L10.5 6.5 M2.5 14.5 L6.5 10.5 M14.5 14.5 L10.5 10.5" stroke="#555" stroke-width="1.7"/></svg>
<div class="t" style="left:965.5px;top:846.50px;font-size:13px;color:#444;font-weight:700;">B</div>
<div class="t" style="left:993px;top:845.5px;font-size:14px;color:#444;line-height:1;font-style:italic;font-weight:bold;font-family:'Liberation Serif'">I</div>
<div class="t" style="left:1019.5px;top:846.50px;font-size:13px;color:#444;font-weight:700;">U</div>
<div class="a" style="left:1019px;top:861px;width:13px;height:1.5px;background:#666"></div>
<div class="t" style="left:1043px;top:847.77px;font-size:11.5px;color:#555;font-weight:700;letter-spacing:-0.6px">abc</div>
<div class="a" style="left:1043px;top:852px;width:19px;height:1.2px;background:#555"></div>
<div class="t" style="left:1073px;top:847.00px;font-size:13px;color:#444;font-weight:700;">x</div>
<div class="t" style="left:1082px;top:855.07px;font-size:7px;color:#4a7fb8;font-weight:700;">2</div>
<div class="t" style="left:1100px;top:847.00px;font-size:13px;color:#444;font-weight:700;">x</div>
<div class="t" style="left:1109px;top:845.07px;font-size:7px;color:#4a7fb8;font-weight:700;">2</div>
<div class="a" style="left:1122px;top:842px;width:1px;height:22px;background:#c8c8c8"></div>
<svg style="left:1130px;top:843px" width="18" height="18" viewBox="0 0 18 18"><g transform="rotate(45 9 9)"><rect x="7.3" y="-2" width="3.4" height="8" rx="1.7" fill="#444"/><rect x="5.8" y="6" width="6.4" height="2" fill="#444"/><rect x="4.6" y="9" width="8.8" height="8.5" rx="0.8" fill="#444"/></g></svg>
<svg style="left:1158px;top:843px" width="18" height="18" viewBox="0 0 18 18"><text x="0" y="9" font-size="10" font-family="Liberation Sans" fill="#8aa0b8">A</text><path d="M6 11 L12 5 L17 10 L11 16 Z" fill="#e8787f"/><path d="M3.5 13.5 L6 11 L11 16 L8.5 18 Z" fill="#f6c7ca"/></svg>
<svg style="left:1192px;top:844px" width="16" height="16" viewBox="0 0 16 16"><path d="M0.5 1.5 L15.5 1.5 M0.5 5.5 L10.5 5.5 M0.5 9.5 L15.5 9.5 M0.5 13.5 L10.5 13.5" stroke="#666" stroke-width="1.6"/></svg>
<svg style="left:1219px;top:844px" width="16" height="16" viewBox="0 0 16 16"><path d="M0.5 1.5 L15.5 1.5 M3 5.5 L13 5.5 M0.5 9.5 L15.5 9.5 M3 13.5 L13 13.5" stroke="#666" stroke-width="1.6"/></svg>
<svg style="left:1247px;top:844px" width="16" height="16" viewBox="0 0 16 16"><path d="M0.5 1.5 L15.5 1.5 M5.5 5.5 L15.5 5.5 M0.5 9.5 L15.5 9.5 M5.5 13.5 L15.5 13.5" stroke="#666" stroke-width="1.6"/></svg>
<svg style="left:1274px;top:844px" width="16" height="16" viewBox="0 0 16 16"><path d="M0.5 1.5 L15.5 1.5 M0.5 5.5 L15.5 5.5 M0.5 9.5 L15.5 9.5 M0.5 13.5 L15.5 13.5" stroke="#666" stroke-width="1.6"/></svg>
<svg style="left:1306px;top:843px" width="17" height="18" viewBox="0 0 17 18"><path d="M6 2.5 L16 2.5 M6 8.5 L16 8.5 M6 14.5 L16 14.5" stroke="#555" stroke-width="1.5"/><text x="0" y="5" font-size="5.5" font-weight="bold" font-family="Liberation Sans" fill="#4a7fb8">1</text><text x="0" y="11" font-size="5.5" font-weight="bold" font-family="Liberation Sans" fill="#4a7fb8">2</text><text x="0" y="17" font-size="5.5" font-weight="bold" font-family="Liberation Sans" fill="#4a7fb8">3</text></svg>
<svg style="left:1334px;top:843px" width="17" height="18" viewBox="0 0 17 18"><path d="M6 2.5 L16 2.5 M6 8.5 L16 8.5 M6 14.5 L16 14.5" stroke="#555" stroke-width="1.5"/><circle cx="1.8" cy="2.5" r="1.5" fill="#555"/><circle cx="1.8" cy="8.5" r="1.5" fill="#555"/><circle cx="1.8" cy="14.5" r="1.5" fill="#555"/></svg>
<div class="a" style="left:1358px;top:842px;width:1px;height:22px;background:#c8c8c8"></div>
<svg style="left:1365px;top:844px" width="18" height="16" viewBox="0 0 18 16"><path d="M8 1.5 L17 1.5 M8 5 L17 5 M8 8.5 L17 8.5 M8 12 L17 12" stroke="#d5dde6" stroke-width="1.5"/><path d="M6 6.8 L1 6.8 M3.5 4.3 L1 6.8 L3.5 9.3" stroke="#c5d2e0" stroke-width="1.5" fill="none"/></svg>
<svg style="left:1391px;top:844px" width="19" height="16" viewBox="0 0 19 16"><path d="M8 1.5 L18 1.5 M11 5 L18 5 M11 8.5 L18 8.5 M8 12 L18 12" stroke="#555" stroke-width="1.6"/><path d="M1 6.8 L7 6.8" stroke="#3c72b0" stroke-width="2"/><path d="M5.5 3.8 L9 6.8 L5.5 9.8 Z" fill="#3c72b0"/></svg>
<div class="a" style="left:47px;top:878px;width:1852px;height:66px;background:#eeeeee"></div>
<div class="a" style="left:916px;top:896px;width:87px;height:38px;background:#33a64a"></div>
<div class="t" style="left:945.5px;top:907.26px;font-size:16px;color:#fff;font-weight:400;transform:scaleX(0.95);transform-origin:0 0">Lưu</div>
<div class="t" style="left:1023.5px;top:905.88px;font-size:15.5px;color:#e0282a;font-weight:400;">Hủy</div>
<div class="a" style="left:0px;top:944px;width:1904px;height:1px;background:#202020"></div>
<div class="a" style="left:245px;top:944px;width:60px;height:1px;background:#5a5a5a"></div>
<div class="a" style="left:373px;top:944px;width:60px;height:1px;background:#b8743c"></div>
<div class="a" style="left:1881px;top:98px;width:20px;height:780px;background:#f7f7f7"></div>
<div class="a" style="left:1881px;top:98px;width:2px;height:780px;background:#f2f2f2"></div>
<div class="a" style="left:1886px;top:98px;width:1px;height:780px;background:#f3f3f3"></div>
<div class="a" style="left:1901px;top:50px;width:3px;height:894px;background:#f1f1f1"></div>
<div class="a" style="left:1901px;top:52px;width:3px;height:616px;background:#c1c1c1"></div>
<div class="a" style="left:1815px;top:840px;width:87px;height:87px;border-radius:50%;background:rgba(240,0,0,0.10);z-index:10"></div>
<div class="a" style="left:1819px;top:844px;width:79px;height:79px;border-radius:50%;background:#ee0000;z-index:11"></div>
<div class="a" style="left:1833px;top:858px;width:51px;height:51px;border-radius:50%;background:#fff;z-index:12"></div>
<svg style="left:1846px;top:871px;z-index:13" width="24" height="26" viewBox="0 0 24 26"><circle cx="12" cy="7" r="6" fill="#ee0000"/><path d="M1.5 24 L1.5 19.5 C1.5 15.5 4 13.5 8 13.5 L16 13.5 C20 13.5 22.5 15.5 22.5 19.5 L22.5 24 Q22.5 25 21.5 25 L2.5 25 Q1.5 25 1.5 24 Z" fill="#ee0000"/><path d="M7 13.3 Q12 16.5 17 13.3" stroke="#fff" stroke-width="1.2" fill="none"/></svg>
</body></html>
